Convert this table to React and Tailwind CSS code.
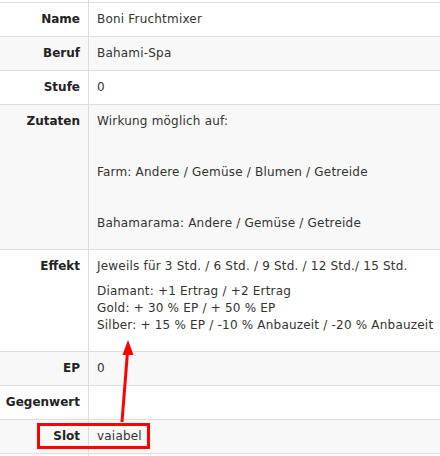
import React from "react";

function Row({ label, gray, children }) {
  return (
    <div className={`flex border-t border-[#dddddd] ${gray ? "bg-[#f8f8f8]" : "bg-white"}`}>
      <div className="w-[89px] shrink-0 border-r border-[#dddddd] py-[8px] pr-[8px] text-right font-bold text-[#222]">
        {label}
      </div>
      <div className="flex-1 py-[8px] pl-[8px] text-[#333] tracking-[0.2px]">{children}</div>
    </div>
  );
}

export default function App() {
  return (
    <div
      className="relative w-[440px] h-[456px] overflow-hidden bg-white text-[12px] leading-[17px]"
      style={{ fontFamily: '"DejaVu Sans", Verdana, sans-serif' }}
    >
      <div className="flex h-[2px]">
        <div className="w-[89px] border-r border-[#dddddd]" />
      </div>
      <Row label="Name">Boni Fruchtmixer</Row>
      <Row label="Beruf" gray>Bahami-Spa</Row>
      <Row label="Stufe">0</Row>
      <Row label="Zutaten" gray>
        <p className="mb-[34px]">Wirkung möglich auf:</p>
        <p className="mb-[34px]">Farm: Andere / Gemüse / Blumen / Getreide</p>
        <p className="mb-[9px]">Bahamarama: Andere / Gemüse / Getreide</p>
      </Row>
      <Row label="Effekt">
        <p className="mb-[8px]">Jeweils für 3 Std. / 6 Std. / 9 Std. / 12 Std./ 15 Std.</p>
        <p className="mb-[9px] whitespace-nowrap">
          Diamant: +1 Ertrag / +2 Ertrag
          <br />
          Gold: + 30 % EP / + 50 % EP
          <br />
          Silber: + 15 % EP / -10 % Anbauzeit / -20 % Anbauzeit
        </p>
      </Row>
      <Row label="EP" gray>0</Row>
      <Row label="Gegenwert">&nbsp;</Row>
      <Row label="Slot" gray>vaiabel</Row>
      <div className="flex h-[3px] border-t border-[#dddddd]">
        <div className="w-[89px] border-r border-[#dddddd]" />
      </div>

      <div className="absolute left-[37px] top-[423px] w-[113px] h-[26px] border-[3px] border-[#ff0000]" />
      <svg className="absolute left-0 top-0" width="440" height="456" viewBox="0 0 440 456">
        <line x1="122" y1="422" x2="127.5" y2="352" stroke="#ff0000" strokeWidth="3" />
        <polygon points="128,340 122.5,355 133.5,355" fill="#ff0000" />
      </svg>
    </div>
  );
}
